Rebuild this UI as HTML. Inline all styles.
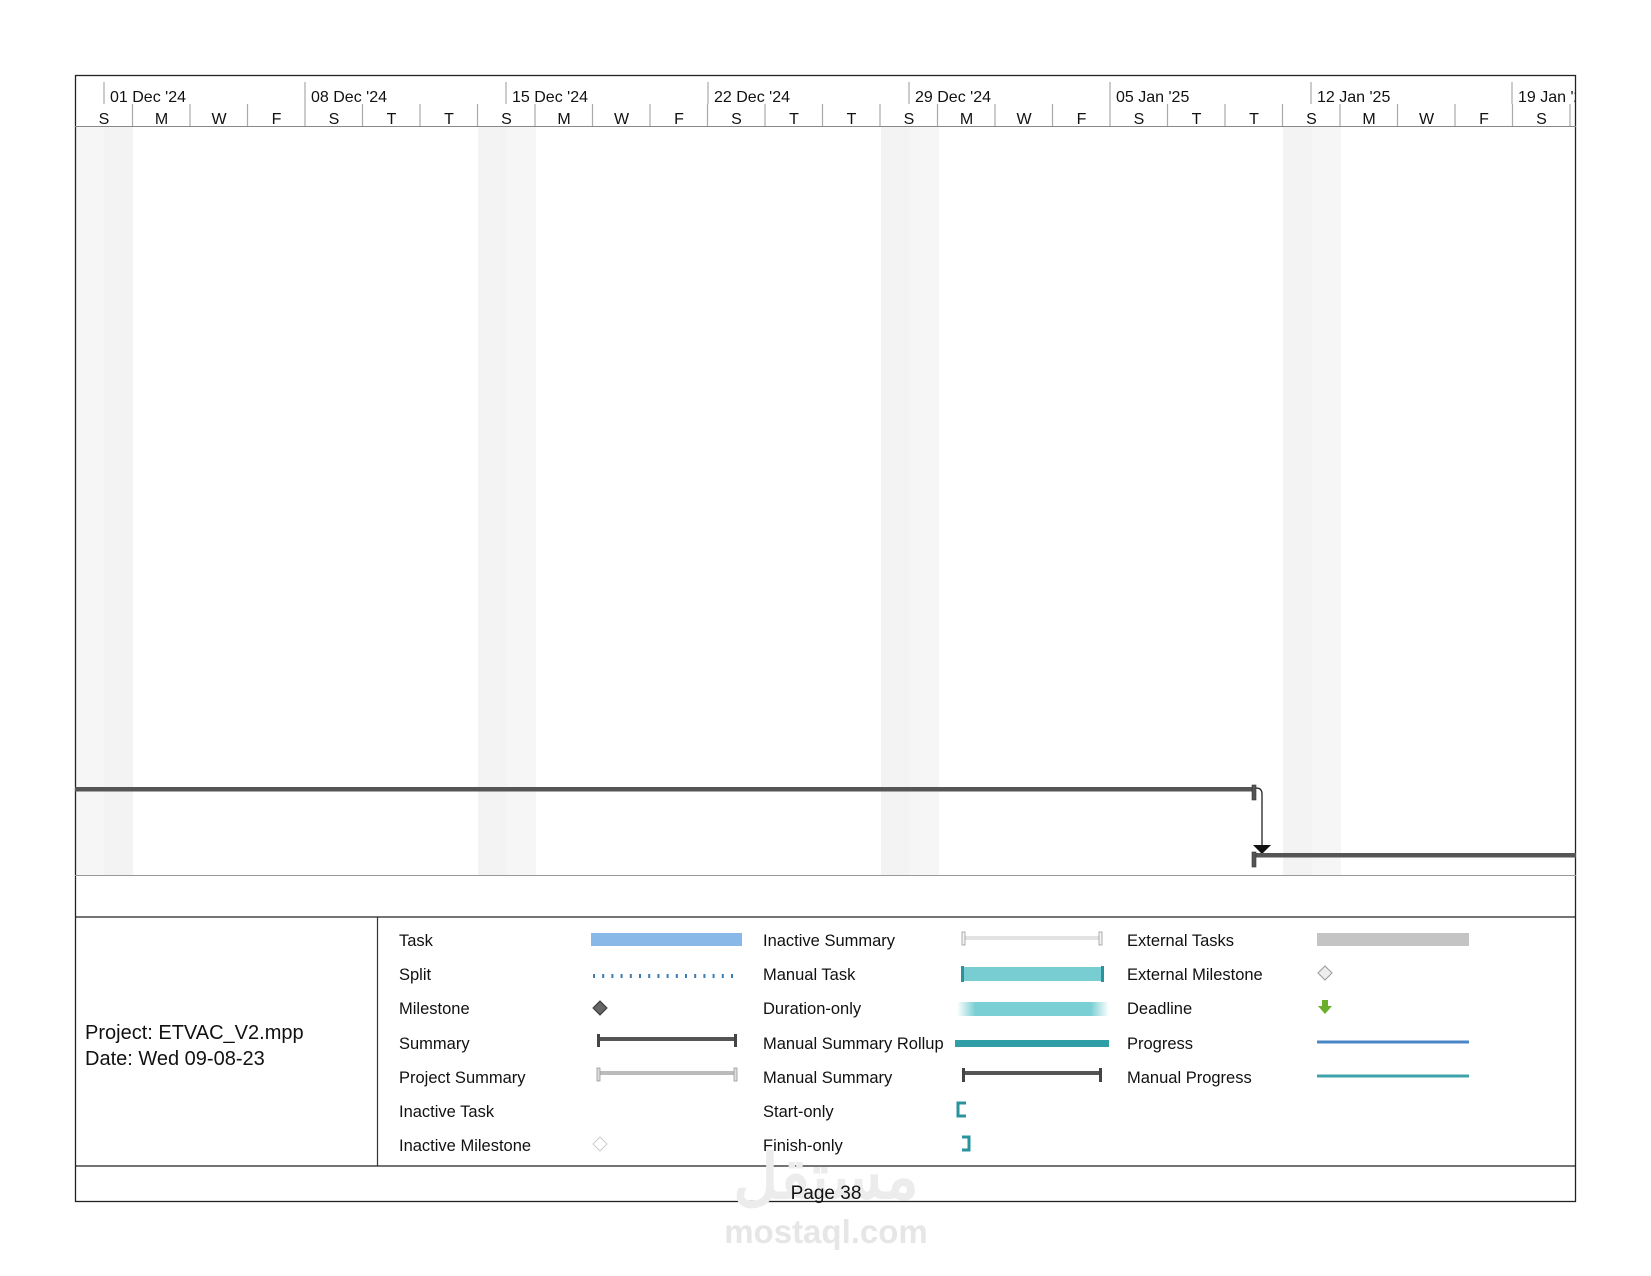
<!DOCTYPE html>
<html><head><meta charset="utf-8"><style>
html,body{margin:0;padding:0;background:#fff;width:1651px;height:1276px;overflow:hidden}
svg{display:block}
text{font-family:"Liberation Sans",sans-serif;fill:#111}
</style></head><body>
<svg width="1651" height="1276" viewBox="0 0 1651 1276" xmlns="http://www.w3.org/2000/svg">
<defs>
<linearGradient id="dur" x1="0" x2="1" y1="0" y2="0">
<stop offset="0" stop-color="#7acfd4" stop-opacity="0"/>
<stop offset="0.12" stop-color="#7acfd4"/>
<stop offset="0.88" stop-color="#7acfd4"/>
<stop offset="1" stop-color="#7acfd4" stop-opacity="0"/>
</linearGradient>
</defs>
<g>
<rect x="75" y="127" width="29" height="748" fill="#f6f6f6"/><rect x="104" y="127" width="29" height="748" fill="#f3f3f3"/>
<rect x="478" y="127" width="29" height="748" fill="#f3f3f3"/><rect x="507" y="127" width="29" height="748" fill="#f6f6f6"/>
<rect x="881" y="127" width="29" height="748" fill="#f3f3f3"/><rect x="910" y="127" width="29" height="748" fill="#f6f6f6"/>
<rect x="1283" y="127" width="29" height="748" fill="#f3f3f3"/><rect x="1312" y="127" width="29" height="748" fill="#f6f6f6"/>
</g>
<rect x="75.5" y="75.5" width="1500" height="1126" fill="none" stroke="#222" stroke-width="1.3"/>
<line x1="75" y1="126.5" x2="1576" y2="126.5" stroke="#888" stroke-width="1"/>
<g stroke="#aaa" stroke-width="1.2">
<line x1="104" y1="82" x2="104" y2="104"/><line x1="305" y1="82" x2="305" y2="104"/>
<line x1="506" y1="82" x2="506" y2="104"/><line x1="708" y1="82" x2="708" y2="104"/>
<line x1="909" y1="82" x2="909" y2="104"/><line x1="1110" y1="82" x2="1110" y2="104"/>
<line x1="1311" y1="82" x2="1311" y2="104"/><line x1="1512" y1="82" x2="1512" y2="104"/>
</g>
<g font-size="16">
<text x="110" y="102">01 Dec '24</text><text x="311" y="102">08 Dec '24</text>
<text x="512" y="102">15 Dec '24</text><text x="714" y="102">22 Dec '24</text>
<text x="915" y="102">29 Dec '24</text><text x="1116" y="102">05 Jan '25</text>
<text x="1317" y="102">12 Jan '25</text>
</g>
<svg x="1512" y="80" width="63" height="30"><text x="6" y="22" font-size="16">19 Jan '25</text></svg>
<g stroke="#aaa" stroke-width="1.2">
<line x1="132.5" y1="104" x2="132.5" y2="126"/><line x1="190" y1="104" x2="190" y2="126"/><line x1="247.5" y1="104" x2="247.5" y2="126"/><line x1="305" y1="104" x2="305" y2="126"/><line x1="362.5" y1="104" x2="362.5" y2="126"/><line x1="420" y1="104" x2="420" y2="126"/><line x1="477.5" y1="104" x2="477.5" y2="126"/><line x1="535" y1="104" x2="535" y2="126"/><line x1="592.5" y1="104" x2="592.5" y2="126"/><line x1="650" y1="104" x2="650" y2="126"/><line x1="707.5" y1="104" x2="707.5" y2="126"/><line x1="765" y1="104" x2="765" y2="126"/><line x1="822.5" y1="104" x2="822.5" y2="126"/><line x1="880" y1="104" x2="880" y2="126"/><line x1="937.5" y1="104" x2="937.5" y2="126"/><line x1="995" y1="104" x2="995" y2="126"/><line x1="1052.5" y1="104" x2="1052.5" y2="126"/><line x1="1110" y1="104" x2="1110" y2="126"/><line x1="1167.5" y1="104" x2="1167.5" y2="126"/><line x1="1225" y1="104" x2="1225" y2="126"/><line x1="1282.5" y1="104" x2="1282.5" y2="126"/><line x1="1340" y1="104" x2="1340" y2="126"/><line x1="1397.5" y1="104" x2="1397.5" y2="126"/><line x1="1455" y1="104" x2="1455" y2="126"/><line x1="1512.5" y1="104" x2="1512.5" y2="126"/><line x1="1570" y1="104" x2="1570" y2="126"/>
</g>
<g font-size="16" text-anchor="middle">
<text x="104" y="124">S</text><text x="161.5" y="124">M</text><text x="219" y="124">W</text><text x="276.5" y="124">F</text><text x="334" y="124">S</text><text x="391.5" y="124">T</text><text x="449" y="124">T</text><text x="506.5" y="124">S</text><text x="564" y="124">M</text><text x="621.5" y="124">W</text><text x="679" y="124">F</text><text x="736.5" y="124">S</text><text x="794" y="124">T</text><text x="851.5" y="124">T</text><text x="909" y="124">S</text><text x="966.5" y="124">M</text><text x="1024" y="124">W</text><text x="1081.5" y="124">F</text><text x="1139" y="124">S</text><text x="1196.5" y="124">T</text><text x="1254" y="124">T</text><text x="1311.5" y="124">S</text><text x="1369" y="124">M</text><text x="1426.5" y="124">W</text><text x="1484" y="124">F</text><text x="1541.5" y="124">S</text>
</g>
<rect x="75" y="787" width="1180" height="4.5" fill="#555"/>
<rect x="1252" y="785" width="4" height="15" fill="#555" stroke="#333" stroke-width="0.6"/>
<path d="M1256 788 Q1262 788 1262 794 L1262 846" fill="none" stroke="#222" stroke-width="1.3"/>
<path d="M1253 845 L1271 845 L1262 854 Z" fill="#111"/>
<rect x="1254" y="853" width="322" height="4.5" fill="#555"/>
<rect x="1252" y="852" width="4" height="15" fill="#555" stroke="#333" stroke-width="0.6"/>
<line x1="75" y1="875.5" x2="1576" y2="875.5" stroke="#999" stroke-width="1"/>
<line x1="75" y1="917" x2="1576" y2="917" stroke="#222" stroke-width="1.3"/>
<line x1="377.5" y1="917" x2="377.5" y2="1166" stroke="#333" stroke-width="1.2"/>
<line x1="75" y1="1166" x2="1576" y2="1166" stroke="#222" stroke-width="1.3"/>
<g transform="translate(0,-4)">
<text x="85" y="1043" font-size="20">Project: ETVAC_V2.mpp</text>
<text x="85" y="1069" font-size="20">Date: Wed 09-08-23</text>
<g font-size="16.5">
<text x="399" y="950">Task</text><text x="399" y="984">Split</text><text x="399" y="1018">Milestone</text><text x="399" y="1053">Summary</text><text x="399" y="1087">Project Summary</text><text x="399" y="1121">Inactive Task</text><text x="399" y="1155">Inactive Milestone</text>
<text x="763" y="950">Inactive Summary</text><text x="763" y="984">Manual Task</text><text x="763" y="1018">Duration-only</text><text x="763" y="1053">Manual Summary Rollup</text><text x="763" y="1087">Manual Summary</text><text x="763" y="1121">Start-only</text><text x="763" y="1155">Finish-only</text>
<text x="1127" y="950">External Tasks</text><text x="1127" y="984">External Milestone</text><text x="1127" y="1018">Deadline</text><text x="1127" y="1053">Progress</text><text x="1127" y="1087">Manual Progress</text>
</g>
<rect x="591" y="937" width="151" height="13" fill="#88b8e8"/>
<line x1="593" y1="980" x2="740" y2="980" stroke="#3e7bb0" stroke-width="4" stroke-dasharray="2 7.2"/>
<path d="M600 1005 L607 1012 L600 1019 L593 1012 Z" fill="#666" stroke="#333" stroke-width="1"/>
<rect x="598" y="1041" width="139" height="4" fill="#555"/>
<rect x="597" y="1038" width="3" height="13" fill="#444"/><rect x="734" y="1038" width="3" height="13" fill="#444"/>
<rect x="598" y="1075" width="139" height="4" fill="#bbb"/>
<rect x="597" y="1072" width="3" height="13" fill="#ddd" stroke="#999" stroke-width="0.8"/><rect x="734" y="1072" width="3" height="13" fill="#ddd" stroke="#999" stroke-width="0.8"/>
<path d="M600 1141 L607 1148 L600 1155 L593 1148 Z" fill="#fff" stroke="#ccc" stroke-width="1"/>
<rect x="963" y="940" width="139" height="4" fill="#e2e2e2"/>
<rect x="962" y="936" width="3" height="13" fill="#f4f4f4" stroke="#999" stroke-width="0.8"/><rect x="1099" y="936" width="3" height="13" fill="#f4f4f4" stroke="#999" stroke-width="0.8"/>
<rect x="962" y="971" width="141" height="14" fill="#78cdd3"/>
<rect x="961" y="970" width="3" height="16" fill="#2a939c"/><rect x="1101" y="970" width="3" height="16" fill="#2a939c"/>
<rect x="957" y="1006" width="152" height="14" fill="url(#dur)"/>
<rect x="955" y="1044" width="154" height="7" fill="#2f9ea6"/>
<rect x="963" y="1075" width="139" height="4" fill="#555"/>
<rect x="962" y="1072" width="3" height="14" fill="#444"/><rect x="1099" y="1072" width="3" height="14" fill="#444"/>
<path d="M966 1107 L958 1107 L958 1120 L966 1120" fill="none" stroke="#2a939c" stroke-width="3"/>
<path d="M962 1141 L969 1141 L969 1154 L962 1154" fill="none" stroke="#2a939c" stroke-width="3"/>
<rect x="1317" y="937" width="152" height="13" fill="#c4c4c4"/>
<path d="M1325 970 L1332 977 L1325 984 L1318 977 Z" fill="#eee" stroke="#999" stroke-width="1"/>
<path d="M1322 1004 L1328 1004 L1328 1010 L1332 1010 L1325 1018 L1318 1010 L1322 1010 Z" fill="#6aaf2a"/>
<line x1="1317" y1="1046" x2="1469" y2="1046" stroke="#4a86c5" stroke-width="3"/>
<line x1="1317" y1="1080" x2="1469" y2="1080" stroke="#3fa3ad" stroke-width="3"/>
</g>
<text x="826" y="1198" font-size="62" text-anchor="middle" font-weight="bold" style="fill:#ececec;font-family:'Liberation Sans','Noto Sans CJK SC',sans-serif">مستقل</text>
<text x="826" y="1243" font-size="33" text-anchor="middle" font-weight="bold" style="fill:#e6e6e6">mostaql.com</text>
<text x="826" y="1199" font-size="19" text-anchor="middle">Page 38</text>
</svg>
</body></html>
